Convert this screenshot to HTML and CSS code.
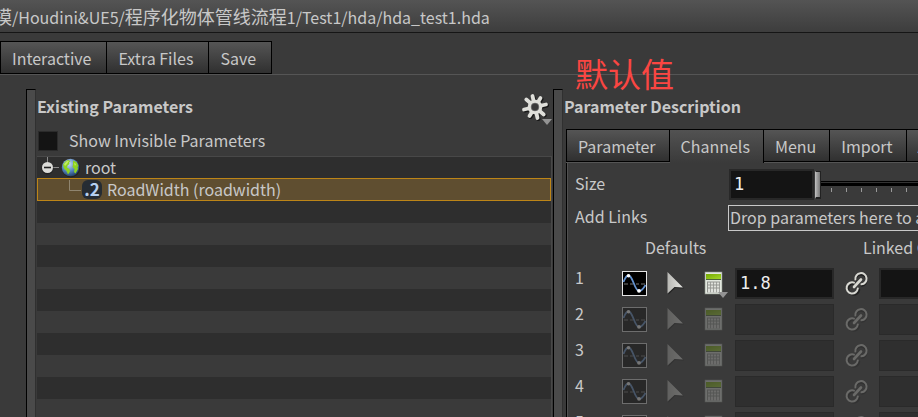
FILE: index.html
```html
<!DOCTYPE html>
<html lang="zh-CN">
<head>
<meta charset="utf-8">
<title>Operator Type Properties</title>
<link rel="stylesheet" href="styles.css">
</head>
<body>
<svg class="defs" aria-hidden="true">
  <defs>
    <linearGradient id="arrowFill" x1="0" y1="0" x2="1" y2="0"><stop offset="0" stop-color="#b8b8b4"/><stop offset="1" stop-color="#e8e8e4"/></linearGradient>
    <linearGradient id="lime" x1="0" y1="0" x2="1" y2="1"><stop offset="0" stop-color="#74a800"/><stop offset="1" stop-color="#a4d82c"/></linearGradient>
    <radialGradient id="sea" cx=".4" cy=".3" r=".7"><stop offset="0" stop-color="#c9dff5"/><stop offset=".6" stop-color="#5685bd"/><stop offset="1" stop-color="#254670"/></radialGradient>
    <symbol id="wave" viewBox="0 0 25 25">
      <rect x=".5" y=".5" width="24" height="24" fill="#000" stroke="#e4e4e4"/>
      <path d="M2 13h4M8 13h3M14 13h3M19 13h4" stroke="#777"/>
      <path d="M1.500 11C3 7 4.500 4.500 6.500 4.500C11 4.500 12.500 20 17 20C20 20 21.500 17 23.500 14" fill="none" stroke="#6492cf" stroke-width="1.800"/>
      <circle cx="6.500" cy="4.800" r="1.800" fill="#fff"/><circle cx="17" cy="19.800" r="1.900" fill="#fff"/>
    </symbol>
    <symbol id="arrow" viewBox="0 0 19 25">
      <path d="M2.500 2.500V23.500L9 17L18 17.500Z" fill="#222"/>
      <path d="M1.500 1L17 16.500L8.500 16L1.500 22.500Z" fill="url(#arrowFill)"/>
    </symbol>
    <symbol id="calc" viewBox="0 0 19 25">
      <rect x="1" y="1" width="17" height="22" fill="#e2e7df" stroke="#8b9188" stroke-width=".6"/>
      <rect x="2" y="3" width="15" height="5" fill="url(#lime)"/><path d="M2 8.500h15" stroke="#4e653a"/>
      <rect x="3" y="10.500" width="13" height="11" fill="#92948f"/>
      <path d="M4 12.500h12M4 15.500h12M4 18.500h12M4 20.500h12" stroke="#dfe1dc" stroke-width="1.800" stroke-dasharray="2.200 .8"/>
    </symbol>
    <symbol id="link" viewBox="0 0 25 25">
      <g fill="none" stroke-linecap="round">
        <g stroke="#222" stroke-width="2.400" transform="translate(1 1)"><path d="M9.500 7.500A5.500 5.500 0 1 1 16 13.500M8 11.500A5.500 5.500 0 1 0 13 18"/></g>
        <path d="M10.400 8.500A5.600 5.600 0 1 1 16.500 13.300M9 11.600A5.600 5.600 0 1 0 12.800 17.500" stroke="#d8d8d2" stroke-width="2"/>
        <path d="M9 16L16 8.500" stroke="#d8d8d2" stroke-width="2.600"/>
      </g>
    </symbol>
  </defs>
</svg>

<header class="titlebar"><span class="path"><span class="cjk">模</span>/Houdini&amp;UE5/<span class="cjk">程序化物体管线流程</span>1/Test1/hda/hda_test1.hda</span></header>

<nav class="tabs main-tabs">
  <button class="tab">Interactive</button><button class="tab">Extra Files</button><button class="tab">Save</button>
</nav>

<main class="workspace">
  <div class="annotation">默认值</div>
  <div class="splitter"></div>
  <section class="existing">
    <div class="heading-row">
      <h2>Existing Parameters</h2>
      <button class="gear" aria-label="Options">
        <svg viewBox="0 0 28 28">
          <g stroke="#171717" stroke-width="4" stroke-linecap="round" transform="translate(1 1)">
            <path d="M11.500 3L16.500 25M3 16.500L25 11.500M5.300 6.500L22.700 21.500M19.500 5L8.500 23"/>
          </g>
          <g stroke="#dfdfda" stroke-width="3.800" stroke-linecap="round">
            <path d="M11.500 3L16.500 25M3 16.500L25 11.500M5.300 6.500L22.700 21.500M19.500 5L8.500 23"/>
          </g>
          <circle cx="14" cy="14" r="7.300" fill="#dfdfda"/><circle cx="14" cy="14" r="3.900" fill="#3a3a3a" stroke="#777" stroke-width=".6"/>
        </svg>
        <i class="drop"></i>
      </button>
    </div>
    <label class="invisible"><input type="checkbox"><span>Show Invisible Parameters</span></label>
    <ul class="tree">
      <li class="node root">
        <svg class="branch" viewBox="0 0 24 22"><path d="M10.500 0V5M16 10.500H22" stroke="#8a8a8a"/><circle cx="10.500" cy="11.500" r="6" fill="#222"/><circle cx="10.500" cy="10.500" r="5.500" fill="#dcdcd8"/><path d="M7 10.500h7" stroke="#222" stroke-width="1.600"/></svg>
        <svg class="icon" viewBox="0 0 20 22"><circle cx="10" cy="11.500" r="9" fill="#222"/><circle cx="9.500" cy="10.500" r="8.700" fill="url(#sea)"/><path d="M2 8C3 5.500 5 3.500 7 3L9.500 4L8 5.500L8.500 7L6.500 8.500L6 10.500L8.500 12L9 14.500L7 17.500L5.500 14L3 11.500ZM12 3.500L15.500 5L17.500 9L16.500 10L17 12L14.500 16.500L13 15L13.500 12L11.500 10L12 7.500Z" fill="#8ed320"/><path d="M3 7L6 4L8 4L6 7L4 9ZM13 6L15 7L14 9Z" fill="#c0ee62"/></svg>
        <span>root</span>
      </li>
      <li class="node selected">
        <svg class="branch child" viewBox="0 0 44 20"><path d="M31.500 0V10.500H43" fill="none" stroke="#8f8570"/></svg>
        <span class="float-icon">.2</span>
        <span>RoadWidth (roadwidth)</span>
      </li>
    </ul>
  </section>
  <div class="splitter"></div>
  <section class="description">
    <div class="heading-row"><h2>Parameter Description</h2></div>
    <nav class="tabs param-tabs">
      <button class="tab">Parameter</button><button class="tab active">Channels</button><button class="tab">Menu</button><button class="tab">Import</button><button class="tab">Action Button</button>
    </nav>
    <div class="pane">
      <div class="field">
        <label for="size">Size</label>
        <input class="value size" id="size" type="text" value="1">
        <input class="slider" type="range" min="1" max="16" value="1" aria-label="Size slider">
      </div>
      <div class="field links">
        <label for="links">Add Links</label>
        <button class="dropbox" id="links">Drop parameters here to add links</button>
      </div>
      <div class="columns"><span>Defaults</span><span>Linked Channels</span></div>
      <div class="channel on">
        <label for="c1">1</label><svg class="i25"><use href="#wave"/></svg><svg class="i19"><use href="#arrow"/></svg><span class="calc"><svg class="i19"><use href="#calc"/></svg><i class="drop"></i></span><input class="value" id="c1" type="text" value="1.8"><svg class="i25"><use href="#link"/></svg><input class="value" type="text" aria-label="Linked channel 1">
      </div>
      <div class="channel">
        <label for="c2">2</label><svg class="i25"><use href="#wave"/></svg><svg class="i19"><use href="#arrow"/></svg><svg class="i19"><use href="#calc"/></svg><input class="value" id="c2" type="text" disabled><svg class="i25"><use href="#link"/></svg><input class="value" type="text" disabled aria-label="Linked channel 2">
      </div>
      <div class="channel">
        <label for="c3">3</label><svg class="i25"><use href="#wave"/></svg><svg class="i19"><use href="#arrow"/></svg><svg class="i19"><use href="#calc"/></svg><input class="value" id="c3" type="text" disabled><svg class="i25"><use href="#link"/></svg><input class="value" type="text" disabled aria-label="Linked channel 3">
      </div>
      <div class="channel">
        <label for="c4">4</label><svg class="i25"><use href="#wave"/></svg><svg class="i19"><use href="#arrow"/></svg><svg class="i19"><use href="#calc"/></svg><input class="value" id="c4" type="text" disabled><svg class="i25"><use href="#link"/></svg><input class="value" type="text" disabled aria-label="Linked channel 4">
      </div>
      <div class="channel">
        <label for="c5">5</label><svg class="i25"><use href="#wave"/></svg><svg class="i19"><use href="#arrow"/></svg><svg class="i19"><use href="#calc"/></svg><input class="value" id="c5" type="text" disabled><svg class="i25"><use href="#link"/></svg><input class="value" type="text" disabled aria-label="Linked channel 5">
      </div>
    </div>
  </section>
</main>
</body>
</html>
```
FILE: styles.css
```css
* { box-sizing: border-box; }
html, body { height: 100%; }
body {
  margin: 0;
  display: flex;
  flex-direction: column;
  overflow: hidden;
  background: #3a3a3a;
  color: #c8c8c8;
  font: 16px/22px "Noto Sans CJK SC", "Noto Sans", sans-serif;
}
button, input { font: inherit; color: inherit; margin: 0; padding: 0; border: 0; border-radius: 0; background: none; }
svg { display: block; flex: none; }
.defs { position: absolute; width: 0; height: 0; }

.titlebar {
  flex: none;
  height: 33px;
  line-height: 32px;
  white-space: nowrap;
  background: linear-gradient(#545454, #3d3d3d);
  border-bottom: 1px solid #151515;
}
.path { margin-left: -6px; }
.cjk { font-size: 18px; }

.tabs { display: flex; flex: none; border-bottom: 1px solid #555; }
.tab {
  flex: none;
  height: 33px;
  padding: 0 13px 0 11px;
  border: 1px solid #000;
  border-left-width: 0;
  background: linear-gradient(#555, #303030);
  white-space: nowrap;
}
.tab:first-child { border-left-width: 1px; }
.main-tabs { margin-top: 8px; }
.main-tabs .tab { padding-right: 15px; }
.param-tabs { margin-left: 2px; }
.tab.active {
  height: 34px;
  margin-bottom: -1px;
  border-bottom: 0;
  padding-bottom: 2px;
  background: linear-gradient(#525252, #3a3a3a);
}

.workspace { position: relative; flex: 1; min-height: 0; display: flex; padding: 14px 0 0 26px; }
.splitter {
  flex: none;
  width: 10px;
  background: #4a4a4a;
  border-top: 1px solid #000;
  border-left: 1px solid #000;
  border-right: 1px solid #303030;
}
.annotation { position: absolute; left: 575px; top: -26px; font-size: 33px; line-height: 48px; color: #fa4642; }

.existing { flex: none; width: 517px; display: flex; flex-direction: column; padding: 0 1px; }
.heading-row { position: relative; display: flex; flex: none; height: 40px; align-items: center; justify-content: space-between; }
h2 { margin: 0; padding-bottom: 6px; font-size: 16px; line-height: 22px; font-weight: 700; }
.gear { position: relative; width: 31px; height: 32px; padding-bottom: 4px; }
.gear svg { width: 28px; height: 28px; }
.drop {
  position: absolute;
  right: 0;
  bottom: 0;
  border: 5px solid transparent;
  border-top: 6px solid #939393;
  border-bottom: 0;
}
.invisible { display: flex; align-items: center; gap: 11px; flex: none; height: 27px; padding: 0 0 3px 1px; }
.invisible span, .node > span:last-child { padding-bottom: 2px; }
.invisible input { appearance: none; width: 20px; height: 20px; background: #141414; border: 1px solid #2b2b2b; }
.tree {
  flex: 1;
  margin: 0;
  padding: 0;
  list-style: none;
  border: 1px solid #484848;
  border-width: 1px 1px 0 0;
  background: repeating-linear-gradient(#2e2e2e 0 22px, #3a3a3a 22px 44px);
}
.node { display: flex; align-items: center; height: 22px; }
.branch { width: 24px; height: 22px; }
.icon { width: 20px; height: 22px; margin-right: 4px; }
.selected { height: 23px; margin-top: -1px; background: #5f4e30; border: 1px solid #bd8517; }
.branch.child { width: 44px; height: 20px; }
.float-icon {
  width: 20px;
  height: 19px;
  margin-right: 5px;
  border-radius: 6px;
  background: #252c33;
  color: #b5d0f0;
  font: 700 17px/18px "Noto Sans CJK SC", sans-serif;
  text-align: center;
}

.description { flex: 1; min-width: 500px; display: flex; flex-direction: column; padding-left: 1px; }
.pane { flex: 1; margin-left: 2px; padding: 6px 0 0 8px; border-left: 1px solid #000; box-shadow: inset 1px 0 #505050; }
.field { display: flex; align-items: center; height: 31px; }
.field label { flex: none; width: 154px; padding-bottom: 3px; }
.value { width: 99px; height: 31px; padding: 0 3px 2px; background: #141414; border: 2px solid #282828; color: #eee; font: 17px/22px "DejaVu Sans Mono", monospace; }
.value.size { width: 85px; flex: none; }
.value:disabled { background: #2f2f2f; border: 1px solid #2a2a2a; }
.slider {
  appearance: none;
  flex: 1;
  height: 31px;
  margin-left: 1px;
  background:
    repeating-linear-gradient(90deg, #999 0 1px, transparent 1px 15px) 16px 19px / 100% 4px no-repeat,
    linear-gradient(#000 0 1px, #333 1px 2px, #000 2px 5px) 6px 12px / 100% 5px no-repeat;
}
.slider::-webkit-slider-thumb { appearance: none; width: 6px; height: 28px; background: linear-gradient(90deg, #b0b0b0, #777); border: 1px solid #222; border-left-color: #bbb; border-bottom-width: 2px; }
.links { margin-top: 2px; }
.links label { width: 153px; }
.dropbox { flex: 1; height: 26px; padding: 0 1px 3px; border: 1px solid #c8c8c8; text-align: left; white-space: nowrap; }
.columns { display: grid; grid-template-columns: 218px 1fr; height: 35px; padding: 3px 0 0 70px; white-space: nowrap; }
.channel {
  display: grid;
  grid-template-columns: 47px 44px 38px 31px 110px 34px 1fr;
  align-items: center;
  height: 36px;
  padding-bottom: 5px;
}
.channel label { align-self: start; line-height: 18px; }
.channel .value:last-child { width: 100%; }
.i25 { width: 25px; height: 25px; }
.i19 { width: 19px; height: 25px; }
.calc { position: relative; width: 24px; }
.calc .drop { bottom: -2px; right: 0; }
.channel:not(.on) svg { opacity: .3; }
```
